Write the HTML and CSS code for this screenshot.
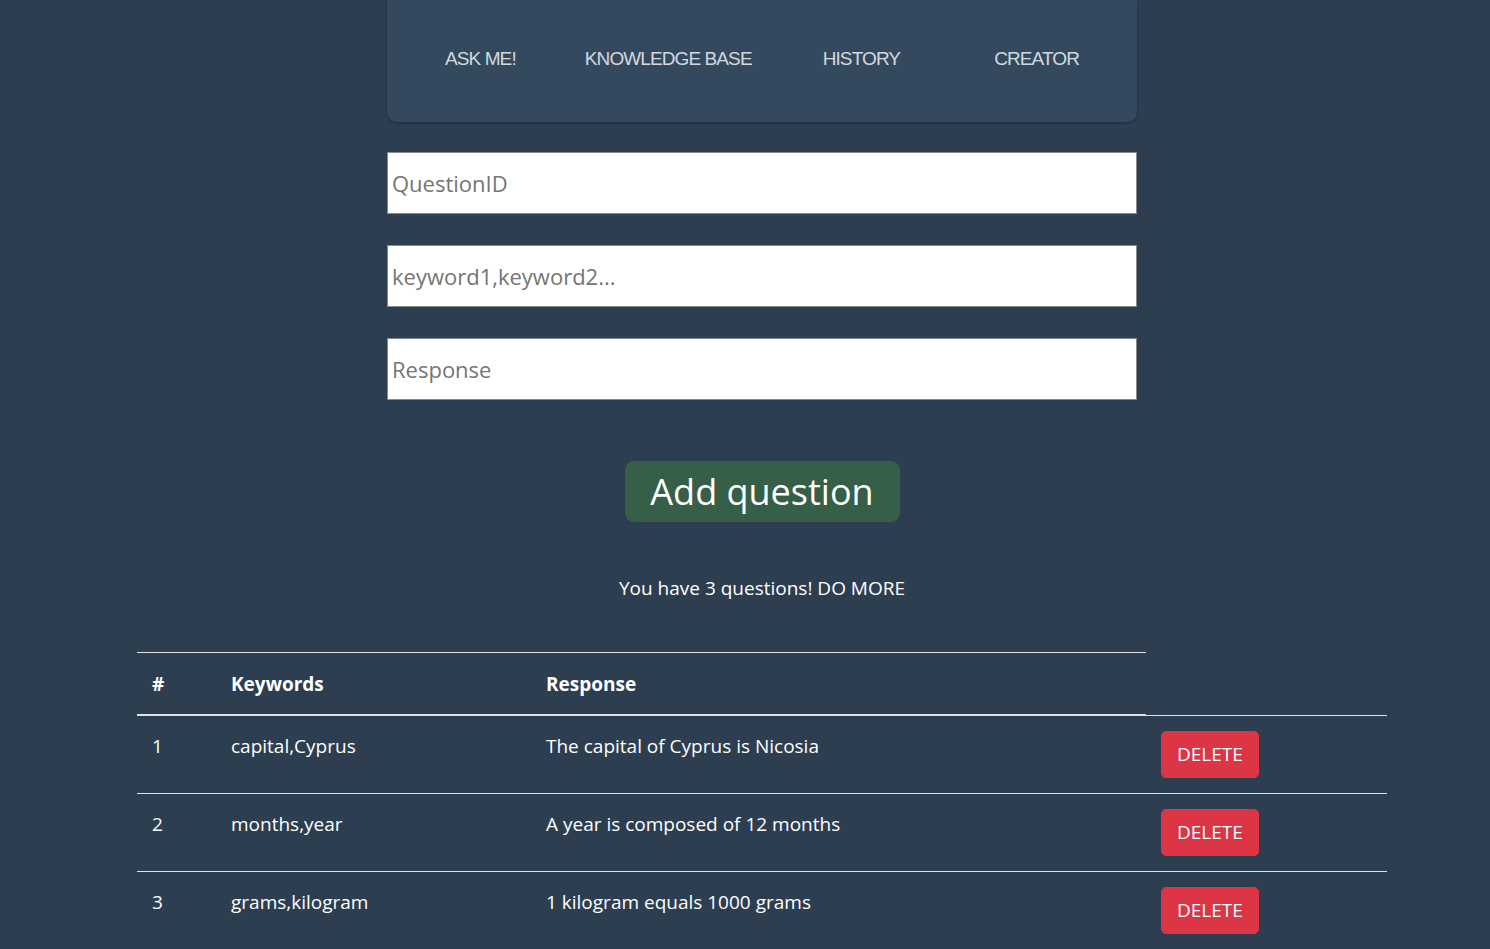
FILE: index.html
```html
<!DOCTYPE html>
<html lang="en">
<head>
<meta charset="utf-8">
<title>Knowledge Base</title>
<link rel="stylesheet" href="styles.css">
</head>
<body>
<div class="page">
  <nav class="nav">
    <a class="nav-item" href="#">ASK ME!</a>
    <a class="nav-item nav-kb" href="#">KNOWLEDGE BASE</a>
    <a class="nav-item nav-hist" href="#">HISTORY</a>
    <a class="nav-item nav-creator" href="#">CREATOR</a>
  </nav>

  <form class="form">
    <input class="field" type="text" placeholder="QuestionID">
    <input class="field" type="text" placeholder="keyword1,keyword2...">
    <input class="field" type="text" placeholder="Response">
    <button class="add-btn" type="button">Add question</button>
  </form>

  <p class="count">You have 3 questions! DO MORE</p>

  <table class="table">
    <thead>
      <tr>
        <th class="c-num">#</th>
        <th class="c-kw">Keywords</th>
        <th class="c-resp">Response</th>
      </tr>
    </thead>
    <tbody>
      <tr>
        <td>1</td>
        <td>capital,Cyprus</td>
        <td>The capital of Cyprus is Nicosia</td>
        <td><button class="del-btn" type="button">DELETE</button></td>
      </tr>
      <tr>
        <td>2</td>
        <td>months,year</td>
        <td>A year is composed of 12 months</td>
        <td><button class="del-btn" type="button">DELETE</button></td>
      </tr>
      <tr>
        <td>3</td>
        <td>grams,kilogram</td>
        <td>1 kilogram equals 1000 grams</td>
        <td><button class="del-btn" type="button">DELETE</button></td>
      </tr>
    </tbody>
  </table>
</div>
</body>
</html>
```

FILE: styles.css
```css
html, body {
  margin: 0;
  padding: 0;
  background: #2c3e50;
}

body {
  font-family: "Open Sans", "Noto Sans", sans-serif;
  font-size: 20px;
  line-height: 1.5;
  color: #ffffff;
}

.page {
  padding-left: 34px;
  display: flex;
  flex-direction: column;
  align-items: center;
}

.nav {
  width: 750px;
  height: 122px;
  box-sizing: border-box;
  background: #34495e;
  border-radius: 0 0 10px 10px;
  box-shadow: 0 1px 3px rgba(0, 0, 0, 0.25);
  display: flex;
  align-items: center;
  justify-content: flex-start;
  padding: 0 0 5px 58px;
}

.nav-item {
  font-family: "Liberation Sans", Arial, sans-serif;
  font-size: 19px;
  letter-spacing: -0.9px;
  color: #d3d9df;
  text-decoration: none;
  line-height: 1;
}

.nav-kb { margin-left: 69px; }
.nav-hist { margin-left: 71px; }
.nav-creator { margin-left: 94px; }

.form {
  width: 750px;
  display: flex;
  flex-direction: column;
  align-items: center;
  margin-top: 30px;
}

.field {
  width: 750px;
  height: 62px;
  box-sizing: border-box;
  margin: 0 0 31px 0;
  padding: 0 4px;
  border: 1px solid #8a8a8a;
  background: #ffffff;
  font-family: "Open Sans", "Noto Sans", sans-serif;
  font-size: 22px;
  color: #333;
  outline: none;
}

.field::placeholder {
  color: #757575;
}

.add-btn {
  margin-top: 30px;
  width: 275px;
  height: 61px;
  border: none;
  border-radius: 9px;
  background: #355f46;
  color: #ffffff;
  font-family: "Open Sans", "Noto Sans", sans-serif;
  font-size: 36px;
  line-height: 1;
  padding: 0;
  cursor: pointer;
}

.count {
  margin: 51px 0 0 0;
  font-size: 19px;
  line-height: 30px;
  text-align: center;
}

.table {
  margin-top: 49px;
  width: 1250px;
  border-collapse: collapse;
  color: #ffffff;
}

.table th,
.table td {
  padding: 15px;
  text-align: left;
  vertical-align: top;
  border-top: 1px solid #dee2e6;
  font-size: 19px;
  line-height: 30px;
}

.table thead th {
  padding-top: 16px;
  border-bottom: 2px solid #dee2e6;
  font-weight: 700;
}

.c-num { width: 49px; }
.c-kw { width: 285px; }
.c-resp { width: 585px; }

.del-btn {
  height: 47px;
  padding: 0 15px;
  border: 1px solid #dc3545;
  border-radius: 5px;
  background: #dc3545;
  color: #ffffff;
  font-family: "Open Sans", "Noto Sans", sans-serif;
  font-size: 19px;
  line-height: 30px;
  cursor: pointer;
}
```
